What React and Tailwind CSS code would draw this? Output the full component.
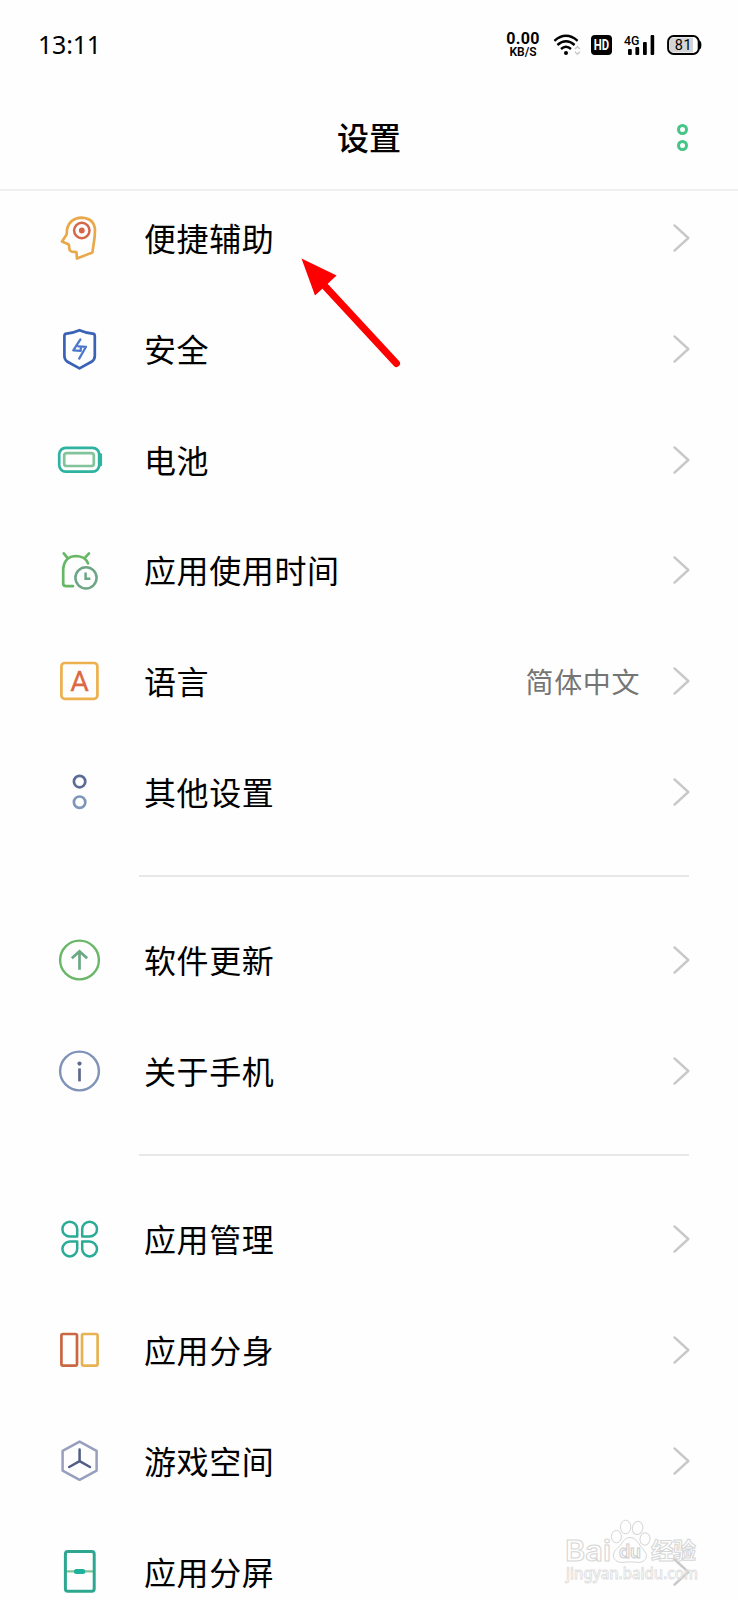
// src/App.jsx
const iconProps = {
  width: 48,
  height: 48,
  viewBox: "0 0 48 48",
  fill: "none",
  strokeWidth: 2.7,
  strokeLinecap: "round",
  strokeLinejoin: "round",
};

// every icon is drawn on a 48x48 grid
const icons = {
  assist: (
    <svg {...iconProps} stroke="#e9a94b">
      <path d="M22 44.6L21.4 38.2L17 37.6Q14.6 37.2 14.4 35L13.8 30.4L7 27.4L11.6 20.4L12.2 14.6Q15 4 26.6 3.6Q39.4 4.4 40 16Q40 22 38.6 30.5L37.4 38.4Z" />
      <circle cx="26.8" cy="16.5" r="7.7" stroke="#d4694a" strokeWidth="2.5" />
      <circle cx="26.8" cy="16.5" r="2.9" fill="#d4694a" stroke="none" />
    </svg>
  ),
  security: (
    <svg {...iconProps} stroke="#3a62b5">
      <path d="M24.5 5.2Q31.5 8.2 37.6 8.6Q39.8 8.8 39.8 11V31Q39.8 34.6 36.5 36.8L24.5 43.4L12.5 36.8Q9.4 34.6 9.4 31V11Q9.4 8.8 11.6 8.6Q17.5 8.2 24.5 5.2Z" />
      <path d="M25.4 14.4L18.3 25.4L25.6 25.8M24.2 33.6L31 21.8L23.4 21.4M25.6 25.8L26 21.6" stroke="#4d77c9" strokeWidth="2.3" />
    </svg>
  ),
  battery: (
    <svg {...iconProps}>
      <rect x="4.2" y="11.8" width="40" height="23.8" rx="6.5" stroke="#2db3a0" />
      <path d="M45.4 18.8V28.8" stroke="#2db3a0" strokeWidth="3.4" />
      <rect x="9.2" y="17.2" width="29.6" height="12.8" rx="2.6" stroke="#82c49a" />
    </svg>
  ),
  usage: (
    <svg {...iconProps} stroke="#67b766">
      <path d="M18 40.2H11.2Q8.2 40.2 8.2 37.2V23Q9.4 10.4 21.2 10Q30.4 10.4 33 17.4M8.8 7.4L12.6 12.2M34 7.4L29.6 12.2" />
      <circle cx="31" cy="31.8" r="10.6" stroke="#6da585" strokeWidth="2.5" />
      <path d="M30.6 26.6V32.8H35.4" stroke="#6da585" strokeWidth="2.5" strokeLinecap="butt" strokeLinejoin="miter" />
    </svg>
  ),
  language: (
    <svg {...iconProps}>
      <rect x="6.4" y="6" width="36" height="35.8" rx="3.4" stroke="#edb04e" />
      <text
        x="24.6"
        y="33.6"
        textAnchor="middle"
        fontFamily="Roboto, sans-serif"
        fontSize="28.5"
        fill="#dc6843"
        stroke="#dc6843"
        strokeWidth="0.3"
      >
        A
      </text>
    </svg>
  ),
  other: (
    <svg {...iconProps}>
      <circle cx="24.6" cy="13.6" r="5.7" stroke="#5b6c94" />
      <circle cx="24.6" cy="34.2" r="5.7" stroke="#7e96b9" />
    </svg>
  ),
  update: (
    <svg {...iconProps} strokeWidth="2.4">
      <circle cx="24.5" cy="24" r="19.4" stroke="#68b767" />
      <path d="M24.5 33.8V15.8M16.8 22.2L24.5 15.4L32.2 22.2" stroke="#6da883" strokeWidth="2.7" strokeLinecap="butt" strokeLinejoin="miter" />
    </svg>
  ),
  about: (
    <svg {...iconProps} strokeWidth="2.4">
      <circle cx="24.5" cy="24" r="19.4" stroke="#7f92b8" />
      <circle cx="24.5" cy="16.6" r="2.1" fill="#5d688c" />
      <path d="M24.5 21.4V34.4" stroke="#5d688c" strokeWidth="2.7" strokeLinecap="butt" />
    </svg>
  ),
  apps: (
    <svg {...iconProps} stroke="#2bab95" strokeWidth="2.5">
      <path d="M22.2 21.6H14.8A7.4 7.4 0 1 1 22.2 14.2ZM27.2 21.6V14.2A7.4 7.4 0 1 1 34.6 21.6ZM22.2 26.6V34A7.4 7.4 0 1 1 14.8 26.6ZM27.2 26.6H34.6A7.4 7.4 0 1 1 27.2 34Z" />
    </svg>
  ),
  clone: (
    <svg {...iconProps}>
      <rect x="6.4" y="8" width="15.6" height="31.6" rx="1.6" stroke="#ca6743" />
      <rect x="27" y="8" width="15.6" height="31.6" rx="1.6" stroke="#e7b251" />
    </svg>
  ),
  game: (
    <svg {...iconProps} strokeWidth="2.5">
      <path d="M24.6 4.6L41.6 13.8V33.6L24.6 42.8L7.6 33.6V13.8Z" stroke="#989fbe" />
      <path d="M24.6 12.6V24.2M24.6 24.2L14.2 30M24.6 24.2L35 30" stroke="#505e86" />
    </svg>
  ),
  split: (
    <svg {...iconProps} stroke="#2ea791">
      <path d="M11 23.4H38" stroke="#82c29a" strokeWidth="2.2" />
      <rect x="10.4" y="3.6" width="28.8" height="39.6" rx="2.4" strokeWidth="3" />
      <path d="M21.4 23.4H27.8" strokeWidth="5" stroke="#1fb19c" />
    </svg>
  ),
};

const sections = [
  [
    { icon: "assist", label: "便捷辅助" },
    { icon: "security", label: "安全" },
    { icon: "battery", label: "电池" },
    { icon: "usage", label: "应用使用时间" },
    { icon: "language", label: "语言", value: "简体中文" },
    { icon: "other", label: "其他设置" },
  ],
  [
    { icon: "update", label: "软件更新" },
    { icon: "about", label: "关于手机" },
  ],
  [
    { icon: "apps", label: "应用管理" },
    { icon: "clone", label: "应用分身" },
    { icon: "game", label: "游戏空间" },
    { icon: "split", label: "应用分屏" },
  ],
];

function StatusBar() {
  return (
    <div className="flex h-[90px] items-center pl-[38px] pr-[36px]">
      <span className="pb-[2px] font-['Noto_Sans',sans-serif] text-[25px] leading-none tracking-[-0.2px]">13:11</span>
      <div className="ml-auto flex items-center">
        <div className="flex w-[34px] flex-col items-center font-[Roboto,sans-serif] font-bold">
          <span className="text-[16px] leading-[14px] tracking-[0.3px]">0.00</span>
          <span className="text-[12px] font-semibold leading-[12px]">KB/S</span>
        </div>
        <svg className="ml-[13px]" width="28" height="22" viewBox="0 0 28 22" fill="none">
          <path d="M1.4 6.8Q13 -3.2 24.6 6.8" stroke="#000" strokeWidth="2.4" />
          <path d="M4.4 11Q13 3.6 21.6 11" stroke="#000" strokeWidth="2.4" />
          <path d="M8 15Q13 10.6 18 15" stroke="#000" strokeWidth="2.4" />
          <circle cx="13" cy="19" r="2" fill="#000" />
          <path d="M22 15L24.4 12.6L26.8 15M22 17.8L24.4 20.2L26.8 17.8" stroke="#c9c9c9" strokeWidth="1.6" />
        </svg>
        <svg className="ml-[10px] overflow-visible" width="21" height="20" viewBox="0 0 21 20">
          <rect width="21" height="20" rx="4" />
          <text x="2.8" y="15" fontFamily="Roboto, sans-serif" fontSize="14.5" fontWeight="700" fill="#fff" textLength="15.4" lengthAdjust="spacingAndGlyphs">
            HD
          </text>
        </svg>
        <svg className="ml-[12px] overflow-visible" width="31" height="20" viewBox="0 0 31 20">
          <text x="0" y="9.6" fontFamily="Roboto, sans-serif" fontSize="13.5" fontWeight="500" textLength="15.4" lengthAdjust="spacingAndGlyphs">
            4G
          </text>
          <rect x="4" y="14" width="3.8" height="6" rx="1" />
          <rect x="11.4" y="12" width="3.8" height="8" rx="1" />
          <rect x="19" y="7" width="3.8" height="13" rx="1" />
          <rect x="26.6" y="0" width="3.6" height="20" rx="1" />
        </svg>
        <svg className="ml-[12px]" width="35" height="20" viewBox="0 0 35 20">
          <path d="M31 5.5H32.4Q34.4 6 34.4 10Q34.4 14 32.4 14.5H31Z" />
          <rect x="1.1" y="1.1" width="30.6" height="17.8" rx="5.5" fill="#fff" stroke="#000" strokeWidth="2" />
          <path d="M7 2.5H26V17.5H7Q2.5 17.5 2.5 13V7Q2.5 2.5 7 2.5Z" fill="#d4d4d4" />
          <text x="16.6" y="15" textAnchor="middle" fontFamily="Roboto, sans-serif" fontSize="14.5" letterSpacing="0.6">
            81
          </text>
        </svg>
      </div>
    </div>
  );
}

function Row({ icon, label, value }) {
  return (
    <li className="flex h-[110.8px] items-center pl-[55px] pr-[48px]">
      <span className="shrink-0">{icons[icon]}</span>
      <span className="ml-[41px] pb-[2px] text-[32px] leading-none tracking-[0.6px] text-black">{label}</span>
      {value && <span className="ml-auto mr-[33px] text-[28px] leading-none tracking-[0.6px] text-[#757575]">{value}</span>}
      <svg className={value ? "shrink-0" : "ml-auto shrink-0"} width="17" height="28" viewBox="0 0 17 28" fill="none">
        <path d="M1.5 1.4L15.3 14L1.5 26.6" stroke="#c8c8c8" strokeWidth="2.4" strokeLinecap="round" strokeLinejoin="round" />
      </svg>
    </li>
  );
}

function Divider() {
  return (
    <div className="flex h-[57.4px] items-center pl-[139px] pr-[49px]">
      <div className="h-[2px] w-full bg-[#e8e8e8]" />
    </div>
  );
}

function Watermark() {
  return (
    <svg
      className="absolute left-[560px] top-[1515px] overflow-visible"
      width="150"
      height="72"
      viewBox="0 0 150 72"
      fill="#fff"
      stroke="#d6d6d6"
      strokeWidth="1"
      fillOpacity="0.3"
    >
      <text x="5" y="46" fontFamily="Inter, sans-serif" fontSize="28" fontWeight="600" textLength="46" lengthAdjust="spacingAndGlyphs">
        Bai
      </text>
      <ellipse cx="56.4" cy="21.6" rx="5" ry="6.2" />
      <ellipse cx="65.6" cy="12" rx="5.2" ry="6.8" />
      <ellipse cx="77.6" cy="13" rx="5.2" ry="6.6" transform="rotate(12 77.6 13)" />
      <ellipse cx="85" cy="24" rx="5" ry="6.2" transform="rotate(12 85 24)" />
      <path d="M70 22.4Q75 22.4 78 27.4Q80 31 84 35Q88 40 86 43.4Q83 48.4 76 47.2Q70 46.6 64 47.2Q57 48.4 54 43.4Q52 38 57 33.4Q61 30.4 63 26.4Q66 22.4 70 22.4Z" />
      <text x="59" y="43" fontFamily="Inter, sans-serif" fontSize="18" fontWeight="600" stroke="#cdcdcd" textLength="22" lengthAdjust="spacingAndGlyphs">
        du
      </text>
      <text x="91" y="44" fontFamily="'Noto Sans CJK SC', sans-serif" fontSize="23" fontWeight="700" textLength="45">
        经验
      </text>
      <text x="6" y="64" fontFamily="'Noto Sans', sans-serif" fontSize="16" fontWeight="500" stroke="#dcdcdc" strokeWidth="0.8" textLength="132" lengthAdjust="spacingAndGlyphs">
        jingyan.baidu.com
      </text>
    </svg>
  );
}

export default function App() {
  return (
    <div className="relative h-[1600px] w-[738px] overflow-hidden bg-[#fefefe] font-['Noto_Sans_CJK_SC',sans-serif] text-black">
      <header className="h-[191px] border-b-2 border-[#f0f0f0]">
        <StatusBar />
        <div className="grid h-[94px] grid-cols-3 items-center">
          <h1 className="col-start-2 pb-[2px] text-center text-[32px] font-medium leading-none">设置</h1>
          <button className="mr-[50px] flex flex-col gap-[5px] justify-self-end">
            <span className="size-[11px] rounded-full border-3 border-[#45c588]" />
            <span className="size-[11px] rounded-full border-3 border-[#45c588]" />
          </button>
        </div>
      </header>

      <main className="-mt-[8.4px]">
        {sections.map((rows, i) => (
          <section key={i}>
            {i > 0 && <Divider />}
            <ul>
              {rows.map((row) => (
                <Row key={row.label} {...row} />
              ))}
            </ul>
          </section>
        ))}
      </main>

      {/* red pointer towards the first row */}
      <svg className="absolute left-[300px] top-[255px]" width="104" height="116" viewBox="0 0 104 116">
        <path d="M22 28L96.5 108.5" stroke="#fe0000" strokeWidth="7" strokeLinecap="round" />
        <path d="M1.5 3.5L36.6 20.5L15 40.5Z" fill="#fe0000" />
      </svg>

      <Watermark />
    </div>
  );
}
